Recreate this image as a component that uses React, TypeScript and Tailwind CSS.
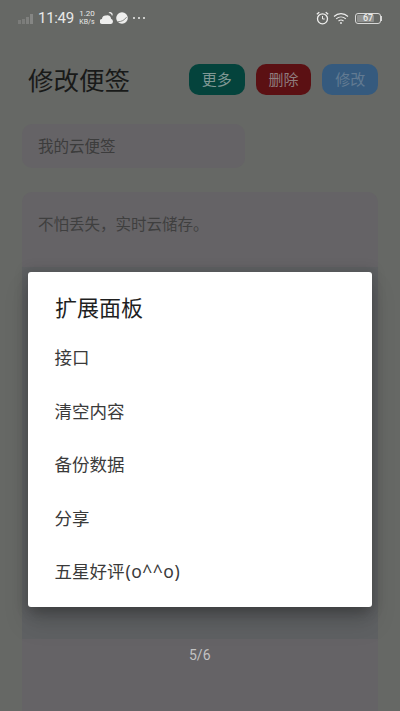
import React from 'react'

const font = { fontFamily: '"Noto Sans CJK SC", sans-serif' }

const items = [
    { label: '接口' },
    { label: '清空内容' },
    { label: '备份数据' },
    { label: '分享' },
    { label: '五星好评', suffix: '(o^^o)' },
]

const StatusBar = () => (
    <div className="h-[36px] flex items-center pl-[18px] pr-[18px] text-[#e9e9e8] font-['Roboto',sans-serif]">
        <div className="flex items-end gap-[1px] h-[10px] mt-[2px]">
            <div className="w-[3px] h-[4px] bg-[#7b7c7a]" />
            <div className="w-[3px] h-[5px] bg-[#7b7c7a]" />
            <div className="w-[3px] h-[7px] bg-[#7f807e]" />
            <div className="w-[3px] h-[10px] bg-[#858684]" />
        </div>
        <span className="w-[35px] ml-[5px] text-[15px] leading-none tracking-[-0.3px]">11:49</span>
        <div className="ml-[6px] w-[16px] flex flex-col items-center text-[7px] leading-[8px] mt-[-1px]">
            <span className="text-[8px]">1.20</span>
            <span>KB/s</span>
        </div>
        <svg width="13" height="13" viewBox="0 0 13 13" className="ml-[5px]" fill="#eeeeed">
            <path d="M2.500 12a2.500 2.500 0 0 1-.5-5 3.500 3.500 0 0 1 4-3.500 3.500 3.500 0 0 1 5 3.300 2.700 2.700 0 0 1 0 5.200z" />
            <path d="M8.500 1a2.300 2.300 0 0 1 3.500 3 3.800 3.800 0 0 0-3.500-3z" />
        </svg>
        <svg width="12" height="12" viewBox="0 0 13 13" className="ml-[3px]" fill="#eeeeed">
            <circle cx="6.500" cy="6.500" r="6.300" />
            <path d="M2 10.500c4 0 7-1.500 9.500-5" stroke="#666865" strokeWidth="0.800" fill="none" />
        </svg>
        <div className="ml-[5px] flex gap-[3px]">
            <div className="w-[2px] h-[2px] rounded-full bg-[#eeeeed]" />
            <div className="w-[2px] h-[2px] rounded-full bg-[#eeeeed]" />
            <div className="w-[2px] h-[2px] rounded-full bg-[#eeeeed]" />
        </div>
        <div className="flex-1" />
        <svg width="13" height="14" viewBox="0 0 13 14" fill="none" stroke="#eeeeed" strokeWidth="1.300">
            <circle cx="6.500" cy="7.800" r="5" />
            <path d="M6.500 5v3h2.200" strokeWidth="1" />
            <path d="M0.800 3.200l2.500-2M12.200 3.200l-2.500-2" />
        </svg>
        <svg width="16" height="13" viewBox="0 0 16 13" className="ml-[4px]" fill="none" stroke="#eeeeed" strokeWidth="1.100">
            <path d="M1 4.500c4-3.800 10-3.800 14 0" />
            <path d="M3.200 6.800c2.800-2.500 6.800-2.500 9.600 0" />
            <path d="M5.500 9c1.500-1.200 3.500-1.200 5 0" />
            <circle cx="8" cy="11" r="0.900" fill="#eeeeed" stroke="none" />
        </svg>
        <div className="ml-[6px] flex items-center">
            <div className="w-[26px] h-[11px] rounded-[3px] border border-[#d8d8d7] p-[1px] relative">
                <div className="h-full w-[76%] bg-[#8f908e] rounded-[1px]" />
                <span className="absolute inset-0 flex items-center justify-center text-[9px] leading-none font-medium text-[#ececeb]">67</span>
            </div>
            <div className="w-[1px] h-[5px] bg-[#d8d8d7]" />
        </div>
    </div>
)

const HeaderButton = ({ label, bg, text }: { label: string; bg: string; text: string }) => (
    <div className={`w-[55.67px] h-[31px] rounded-[10px] flex items-center justify-center text-[15px] ${bg} ${text}`}>{label}</div>
)

export default function App() {
    return (
        <div className="relative w-[400px] h-[711px] overflow-hidden bg-[#666865]" style={font}>
            <StatusBar />

            <div className="mt-[28px] pl-[28px] pr-[22px] flex items-center h-[31px]">
                <h1 className="text-[25.5px] text-[#191a19] flex-1">修改便签</h1>
                <div className="flex gap-[11px]">
                    <HeaderButton label="更多" bg="bg-[#04433c]" text="text-[#7f9794]" />
                    <HeaderButton label="删除" bg="bg-[#5b1013]" text="text-[#8f7d7e]" />
                    <HeaderButton label="修改" bg="bg-[#355a7e]" text="text-[#627a92]" />
                </div>
            </div>

            <div className="mt-[29px] mx-[22px] w-[223px] h-[44px] rounded-[10px] bg-[#656366] pl-[16px] pb-[1px] flex items-center text-[15.5px] text-[#3c3c3c]">
                我的云便签
            </div>

            <div className="mt-[24px] mx-[22px] h-[519px] rounded-t-[10px] bg-[#656366] px-[16px] pt-[19px] text-[15.5px] text-[#3f3f3f] leading-[24px]">
                不怕丢失，实时云储存。
            </div>

            {/* dialog shadow band */}
            <div className="absolute left-[22px] top-[267px] w-[356px] h-[372px] bg-[#5f6163]" />
            <div className="absolute left-[189px] top-[645px] text-[14px] leading-[20px] text-[#c2c2c2] font-['Roboto',sans-serif]">5/6</div>

            <div className="absolute left-[28px] top-[272px] w-[344px] h-[335px] rounded-[3px] bg-white shadow-[0_10px_14px_-4px_rgba(0,0,0,0.22),0_16px_24px_2px_rgba(0,0,0,0.1),0_0_12px_4px_rgba(0,0,0,0.1)]">
                <div className="pl-[27px] h-[58.5px] pt-[18px] text-[22px] leading-[32px] text-[#1f1f1f]">扩展面板</div>
                {items.map((item) => (
                    <div key={item.label} className="pl-[26.5px] h-[53.5px] flex items-center text-[17.5px] text-[#3a3a3a]">
                        {item.label}
                        {item.suffix && <span className="ml-[1px] font-['Noto_Sans',sans-serif] tracking-[0.5px]">{item.suffix}</span>}
                    </div>
                ))}
            </div>
        </div>
    )
}
